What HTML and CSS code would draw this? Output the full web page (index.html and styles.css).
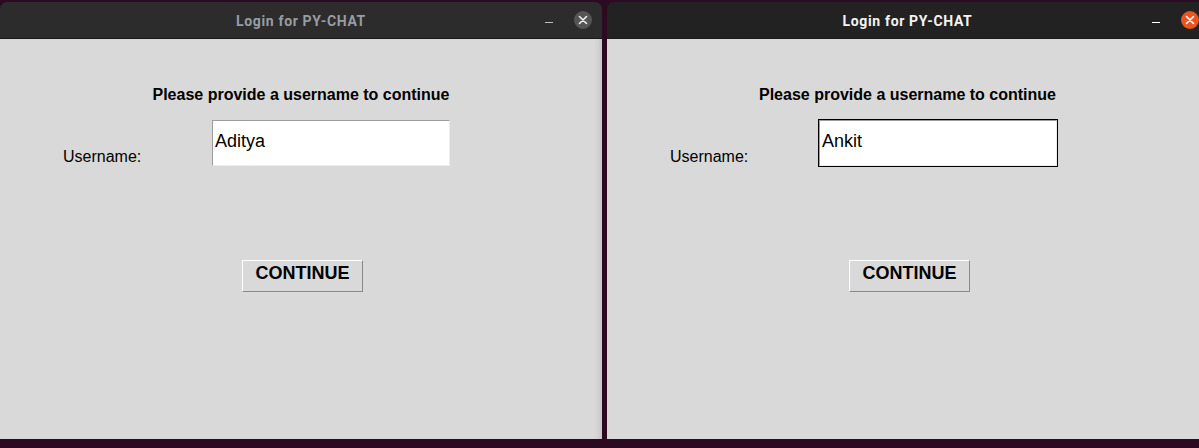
FILE: index.html
```html
<!DOCTYPE html>
<html>
<head>
<meta charset="utf-8">
<link rel="stylesheet" href="styles.css">
<title>PY-CHAT logins</title>
</head>
<body>
<div class="desktop">
  <div class="window inactive">
    <div class="titlebar">
      <span class="title">Login for PY-CHAT</span>
      <span class="minimize"></span>
      <span class="close">
        <svg width="18" height="18" viewBox="0 0 18 18"><path d="M5.5 5.5 L12.5 12.5 M12.5 5.5 L5.5 12.5" stroke="#f0f0f0" stroke-width="1.6" stroke-linecap="round"/></svg>
      </span>
    </div>
    <div class="content">
      <div class="heading">Please provide a username to continue</div>
      <div class="field-row">
        <div class="label">Username:</div>
        <div class="entry"><div class="entry-inner">Aditya</div></div>
      </div>
      <div class="button-row">
        <div class="button">CONTINUE</div>
      </div>
    </div>
  </div>
  <div class="window active">
    <div class="titlebar">
      <span class="title">Login for PY-CHAT</span>
      <span class="minimize"></span>
      <span class="close">
        <svg width="18" height="18" viewBox="0 0 18 18"><path d="M5.5 5.5 L12.5 12.5 M12.5 5.5 L5.5 12.5" stroke="#ffffff" stroke-width="1.6" stroke-linecap="round"/></svg>
      </span>
    </div>
    <div class="content">
      <div class="heading">Please provide a username to continue</div>
      <div class="field-row">
        <div class="label">Username:</div>
        <div class="entry focused"><div class="entry-inner">Ankit</div></div>
      </div>
      <div class="button-row">
        <div class="button">CONTINUE</div>
      </div>
    </div>
  </div>
</div>
</body>
</html>
```

FILE: styles.css
```css
html, body {
  margin: 0;
  padding: 0;
  width: 1199px;
  height: 448px;
  overflow: hidden;
  background: #2c0b22;
}

.desktop {
  display: flex;
  gap: 5px;
  padding-top: 2px;
  width: 1220px;
}

.window {
  width: 602px;
  height: 437px;
  flex: none;
  display: flex;
  flex-direction: column;
  border-radius: 7px 7px 0 0;
  overflow: hidden;
}

.window.active {
  width: 601px;
}

.titlebar {
  height: 36px;
  border-bottom: 1px solid #191919;
  background: #2c2c2c;
  position: relative;
  display: flex;
  align-items: center;
  justify-content: center;
  flex: none;
}

.active .titlebar {
  background: #222222;
}

.title {
  font-family: Roboto, "Liberation Sans", sans-serif;
  font-weight: 700;
  font-size: 14px;
  letter-spacing: 0.65px;
  color: #989ca3;
  padding-top: 1px;
}

.active .title {
  color: #f3f3f3;
}

.minimize {
  position: absolute;
  left: 545px;
  top: 20px;
  width: 8px;
  height: 1px;
  background: #bdbdbd;
}

.active .minimize {
  background: #ffffff;
}

.close {
  position: absolute;
  left: 574px;
  top: 9px;
  width: 18px;
  height: 18px;
  border-radius: 50%;
  background: #555555;
  display: flex;
}

.active .close {
  background: #e9541f;
}

.content {
  flex: 1;
  background: #d9d9d9;
  display: flex;
  flex-direction: column;
  font-family: "Liberation Sans", Arial, sans-serif;
  color: #000;
}

.inactive .content {
  box-shadow: inset -6px 0 6px -4px rgba(0,0,0,0.12);
}

.heading {
  margin-top: 47px;
  text-align: center;
  font-weight: 700;
  font-size: 16px;
  line-height: 18px;
}

.field-row {
  margin-top: 15px;
  display: flex;
  align-items: flex-end;
  padding-left: 63px;
}

.label {
  width: 148px;
  font-size: 16px;
  line-height: 18px;
  margin-bottom: 1px;
}

.entry {
  width: 238px;
  height: 46px;
  border: 1px solid #d9d9d9;
}

.entry.focused {
  border-color: #000000;
}

.entry-inner {
  box-sizing: border-box;
  background: #ffffff;
  border-top: 1px solid #9d9d9d;
  border-left: 1px solid #9d9d9d;
  border-right: 1px solid #ececec;
  border-bottom: 1px solid #ececec;
  width: 238px;
  height: 46px;
  padding: 10px 0 0 2px;
  font-size: 18px;
  line-height: 21px;
}

.button-row {
  margin-top: 93px;
  padding-left: 242px;
  display: flex;
}

.button {
  width: 121px;
  height: 32px;
  box-sizing: border-box;
  border-top: 1px solid #ffffff;
  border-left: 1px solid #ffffff;
  border-right: 1px solid #8a8a8a;
  border-bottom: 1px solid #8a8a8a;
  background: #d9d9d9;
  display: flex;
  align-items: center;
  justify-content: center;
  font-weight: 700;
  font-size: 18px;
  line-height: 21px;
  padding-bottom: 6px;
}
```
